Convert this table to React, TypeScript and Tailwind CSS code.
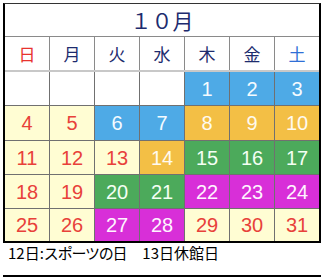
const cream = 'bg-[#fffdd3] text-[#e8413a]';
const blue = 'bg-[#4eaae6] text-[#f4fbff]';
const orange = 'bg-[#f3bf45] text-[#fffaf0]';
const green = 'bg-[#4caa5b] text-[#f4fff4]';
const magenta = 'bg-[#d82fd8] text-[#fff4ff]';
const blank = 'bg-white';

type Cell = { day?: number; tone: string };

const weeks: Cell[][] = [
  [
    { tone: blank },
    { tone: blank },
    { tone: blank },
    { tone: blank },
    { day: 1, tone: blue },
    { day: 2, tone: blue },
    { day: 3, tone: blue },
  ],
  [
    { day: 4, tone: cream },
    { day: 5, tone: cream },
    { day: 6, tone: blue },
    { day: 7, tone: blue },
    { day: 8, tone: orange },
    { day: 9, tone: orange },
    { day: 10, tone: orange },
  ],
  [
    { day: 11, tone: cream },
    { day: 12, tone: cream },
    { day: 13, tone: cream },
    { day: 14, tone: orange },
    { day: 15, tone: green },
    { day: 16, tone: green },
    { day: 17, tone: green },
  ],
  [
    { day: 18, tone: cream },
    { day: 19, tone: cream },
    { day: 20, tone: green },
    { day: 21, tone: green },
    { day: 22, tone: magenta },
    { day: 23, tone: magenta },
    { day: 24, tone: magenta },
  ],
  [
    { day: 25, tone: cream },
    { day: 26, tone: cream },
    { day: 27, tone: magenta },
    { day: 28, tone: magenta },
    { day: 29, tone: cream },
    { day: 30, tone: cream },
    { day: 31, tone: cream },
  ],
];

const weekdays = [
  { label: '日', color: 'text-[#e8332e]' },
  { label: '月', color: 'text-[#1d2b6e]' },
  { label: '火', color: 'text-[#1d2b6e]' },
  { label: '水', color: 'text-[#1d2b6e]' },
  { label: '木', color: 'text-[#1d2b6e]' },
  { label: '金', color: 'text-[#1d2b6e]' },
  { label: '土', color: 'text-[#2f6fd6]' },
];

const jp = "font-['Noto_Sans_CJK_JP',sans-serif]";

export default function App() {
  return (
    <div className="w-[328px] h-[278px] bg-white pt-[3px] pl-[3px] overflow-hidden">
      <div className="w-[318px] border-2 border-t-[1.5px] border-black border-t-[#333]">
        <div
          className={`h-[33px] flex items-center justify-center border-b border-[#8a8a8a] text-[21px] leading-none text-[#1d2b6e] ${jp}`}
        >
          １０月
        </div>

        <div className="grid grid-cols-[repeat(7,44px)] gap-x-px bg-[#8a8a8a] border-b-2 border-[#c8c8c8]">
          {weekdays.map((w) => (
            <div
              key={w.label}
              className={`h-[33px] bg-white flex items-center justify-center text-[17px] leading-none ${w.color} ${jp}`}
            >
              {w.label}
            </div>
          ))}
        </div>

        <div className="grid grid-cols-[repeat(7,44px)] grid-rows-[33px_34px_33px_33px_32px] gap-px bg-[#707070]">
          {weeks.flat().map((c, i) => (
            <div
              key={i}
              className={`flex items-center justify-center text-[20px] leading-none font-['Liberation_Sans',Arial,sans-serif] ${c.tone}`}
            >
              {c.day}
            </div>
          ))}
        </div>
      </div>

      <p className={`pl-[5px] pt-[1px] text-[15px] leading-[18px] text-black ${jp}`}>
        12日:<span className="tracking-[-1.2px]">スポーツの日</span>
        <span className="inline-block w-[16px]" />
        13日休館日
      </p>

      <div className="mt-[13px] w-[318px] border-t-2 border-black" />
    </div>
  );
}
